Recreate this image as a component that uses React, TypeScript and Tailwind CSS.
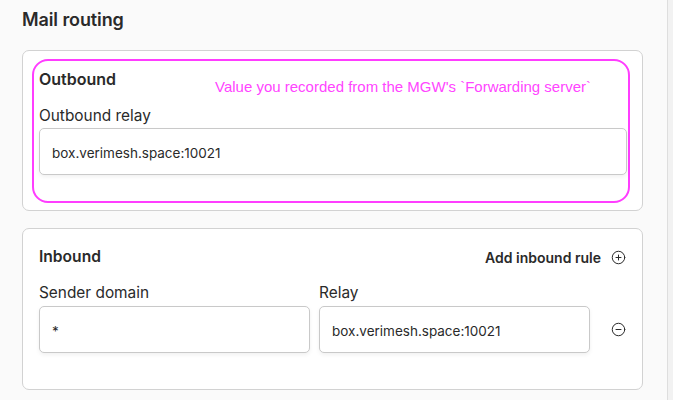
import React from 'react';
import { CirclePlus, CircleMinus } from 'lucide-react';

const font = { fontFamily: 'Inter, "Noto Sans", sans-serif' };

const Field: React.FC<{ value: string; className?: string }> = ({ value, className }) => (
  <div
    className={`flex h-[47px] items-center rounded-[5px] border border-[#c9c9c9] bg-white pl-[12px] pt-[3px] text-[13.5px] text-[#2a2a2a] shadow-[0_2px_4px_rgba(0,0,0,0.06)] ${className ?? ''}`}
  >
    {value}
  </div>
);

const App: React.FC = () => {
  return (
    <div className="flex h-[400px] w-[673px] overflow-hidden bg-[#fafafa] text-[#2a2a2a]" style={font}>
      <div className="w-[667px] pl-[22px] pt-[8px]">
        <h2 className="h-[24px] text-[18px] font-semibold leading-[24px] tracking-[-0.1px]">Mail routing</h2>

        {/* Outbound */}
        <div className="mt-[18px] w-[621px] rounded-[7px] border border-[#d2d2d2] bg-white pl-[9px] pr-[12px] pt-[8px] pb-[7px]">
          <div className="relative rounded-[16px] border-2 border-[#ff3dff] pl-[5px] pr-[1px] pt-[8px] pb-[26px]">
            <div className="h-[20px] text-[16px] font-semibold leading-[20px]">Outbound</div>
            <span
              className="absolute left-[181px] top-[17px] text-[15px] leading-[18px] text-[#ff45ff]"
              style={{ fontFamily: '"Liberation Sans", Arial, sans-serif' }}
            >
              Value you recorded from the MGW's `Forwarding server`
            </span>
            <div className="mt-[15px] h-[24px] text-[15.4px] leading-[24px]">Outbound relay</div>
            <Field value="box.verimesh.space:10021" />
          </div>
        </div>

        {/* Inbound */}
        <div className="mt-[17px] w-[621px] rounded-[7px] border border-[#d2d2d2] bg-white px-[16px] pt-[18px] pb-[36px]">
          <div className="flex h-[20px] items-center justify-between">
            <div className="text-[15.6px] font-semibold leading-[20px]">Inbound</div>
            <button className="flex items-center gap-[10px] text-[14px] font-semibold">
              <span>Add inbound rule</span>
              <CirclePlus size={15} strokeWidth={1.6} className="text-[#2a2a2a]" />
            </button>
          </div>
          <div className="mt-[14px] flex items-end">
            <div className="w-[271px]">
              <div className="h-[24px] text-[15.4px] leading-[24px]">Sender domain</div>
              <Field value="*" className="mt-px" />
            </div>
            <div className="ml-[9px] w-[271px]">
              <div className="h-[24px] text-[15.4px] leading-[24px]">Relay</div>
              <Field value="box.verimesh.space:10021" className="mt-px" />
            </div>
            <div className="flex h-[47px] flex-1 items-center justify-end">
              <CircleMinus size={15} strokeWidth={1.6} className="text-[#2a2a2a]" />
            </div>
          </div>
        </div>
      </div>
      <div className="flex-1 border-l border-[#dedede] bg-[#f2f2f2]" />
    </div>
  );
};

export default App;
